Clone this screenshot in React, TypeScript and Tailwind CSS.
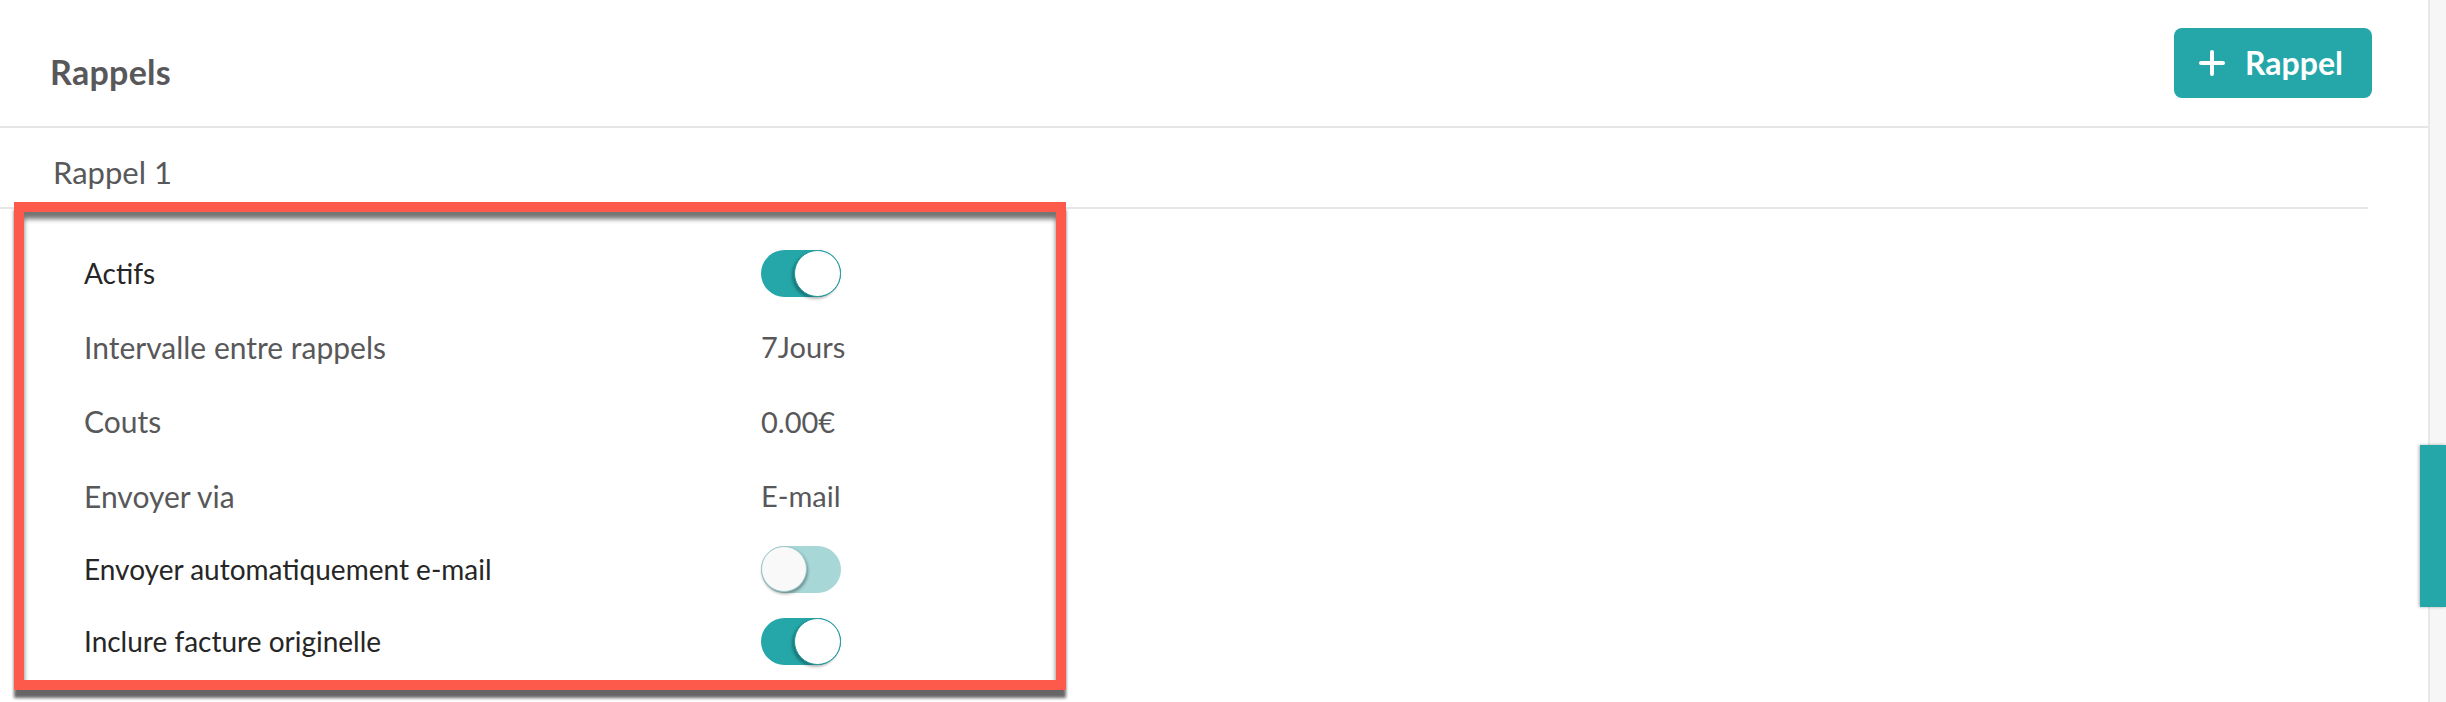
import React from "react";

type Row = {
  label: string;
  value?: string;
  toggle?: boolean;
};

const rows: Row[] = [
  { label: "Actifs", toggle: true },
  { label: "Intervalle entre rappels", value: "7Jours" },
  { label: "Couts", value: "0.00€" },
  { label: "Envoyer via", value: "E-mail" },
  { label: "Envoyer automatiquement e-mail", toggle: false },
  { label: "Inclure facture originelle", toggle: true },
];

const rowHeights = ["h-[74px]", "h-[74px]", "h-[75px]", "h-[74px]", "h-[72px]", "h-[72px]"];

function Toggle({ on }: { on: boolean }) {
  return (
    <div
      className={
        on
          ? "flex h-[47px] w-[80px] justify-end rounded-full bg-[#25a7a9]"
          : "flex h-[47px] w-[80px] justify-start rounded-full bg-[#a8d7d8]"
      }
    >
      {on ? (
        <div className="h-[47px] w-[47px] rounded-full border border-[#1d9799] bg-white shadow-[-2px_2px_3px_rgba(0,0,0,0.3)]" />
      ) : (
        <div className="h-[46px] w-[46px] rounded-full border border-[#9bc9ca] bg-[#f9f9f9] shadow-[1px_2px_3px_rgba(0,0,0,0.35)]" />
      )}
    </div>
  );
}

export default function App() {
  return (
    <div className="relative flex h-[702px] w-[2446px] overflow-hidden bg-white font-['Lato',sans-serif]">
      <main className="flex flex-1 flex-col">
        <header className="flex h-[128px] items-start justify-between border-b-2 border-[#e6e6e6] pl-[50px] pr-[56px] pt-[28px]">
          <h1 className="mt-[23px] text-[34px] font-bold leading-[41px] tracking-[0.3px] text-[#58585a]">Rappels</h1>
          <button className="flex h-[70px] w-[198px] items-center gap-[20px] rounded-[8px] bg-[#25a7a9] pl-[25px] text-[32px] font-bold text-white">
            <svg width="26" height="26" viewBox="0 0 26 26" fill="none">
              <path d="M13 2v22M2 13h22" stroke="white" strokeWidth="4" strokeLinecap="round" />
            </svg>
            <span className="leading-none">Rappel</span>
          </button>
        </header>

        <div className="mr-[60px] h-[81px] border-b-2 border-[#e6e6e6] pl-[53px] pt-[26px]">
          <span className="text-[31px] leading-[37px] text-[#58585a]">Rappel 1</span>
        </div>

        <div className="relative z-10 -mt-[7px] ml-[14px] h-[488px] w-[1052px] border-[10px] border-[#fe5a4b] bg-white pl-[60px] pt-[24px] shadow-[0_8px_3px_rgba(0,0,0,0.6),inset_0_7px_5px_rgba(0,0,0,0.55)]">
          {rows.map((row, i) => (
            <div key={row.label} className={`flex items-center ${rowHeights[i]}`}>
              <span
                className={
                  row.toggle === undefined
                    ? "w-[677px] text-[30px] text-[#58585a]"
                    : "w-[677px] text-[28px] text-[#262626]"
                }
              >
                {row.label}
              </span>
              {row.toggle === undefined ? (
                <span className="text-[29px] text-[#58585a]">{row.value}</span>
              ) : (
                <Toggle on={row.toggle} />
              )}
            </div>
          ))}
        </div>
      </main>

      <aside className="w-[18px] border-l-2 border-[#e9e9e9] bg-[#f6f6f6]" />

      <div className="absolute right-0 top-[445px] h-[162px] w-[26px] bg-[#25a7a9] shadow-[-1px_0_3px_rgba(0,0,0,0.3)]" />
    </div>
  );
}
